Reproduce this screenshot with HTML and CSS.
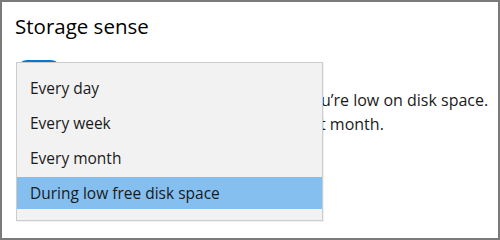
FILE: index.html
```html
<!DOCTYPE html>
<html lang="en">
<head>
    <meta charset="UTF-8">
    <meta name="viewport" content="width=device-width, initial-scale=1.0">
    <title>Storage sense</title>
    <link rel="stylesheet" href="styles.css">
</head>
<body>
    <div class="panel">
        <h1 class="title">Storage sense</h1>
        <div class="toggle"></div>
        <!-- only the tail of the description shows past the open dropdown -->
        <div class="desc">
            <span class="line one">u&rsquo;re low on disk space.</span>
            <span class="line two">t month.</span>
        </div>

        <!-- open dropdown, drawn over the toggle and text -->
        <ul class="menu">
            <li class="item">Every day</li>
            <li class="item">Every week</li>
            <li class="item">Every month</li>
            <li class="item selected">During low free disk space</li>
        </ul>
    </div>
</body>
</html>
```

FILE: styles.css
```css
*, *:before, *:after {
    box-sizing: border-box;
}

:root {
    --border: #7a7a7a;
    --text: #1a1a1a;
    --menu-bg: #f2f2f2;
    --menu-border: #cccccc;
    --accent: #0078d7;
    --selected: #84bff0;
}

body {
    margin: 0;
    font-family: 'Open Sans', 'Noto Sans', sans-serif;
    color: var(--text);
    -webkit-font-smoothing: antialiased;
}

.panel {
    position: relative;
    width: 500px;
    height: 240px;
    border: 2px solid var(--border);
    background-color: #fff;
    padding: 10px 13px 0;
    overflow: hidden;
}

.title {
    margin: 0;
    font-size: 20.5px;
    font-weight: 400;
    line-height: 28px;
    color: #000;
}

.toggle {
    width: 44px;
    height: 20px;
    margin-top: 20px;
    margin-left: 2px;
    border-radius: 10px;
    background-color: var(--accent);
}

.desc {
    display: flex;
    flex-direction: column;
    margin-top: 8px;
    padding-left: 306px;
    font-size: 16px;
    line-height: 24px;
    white-space: nowrap;
}

.line.two {
    margin-left: -1px;
}

.menu {
    position: absolute;
    left: 14px;
    top: 60px;
    width: 307px;
    height: 159px;
    margin: 0;
    padding: 9px 0 0;
    list-style: none;
    background-color: var(--menu-bg);
    border: 1px solid var(--menu-border);
    box-shadow: 1px 1px 0 rgba(0, 0, 0, 0.06);
    display: flex;
    flex-direction: column;
    gap: 3px;
}

.item {
    height: 32px;
    padding: 0 13px;
    font-size: 15.5px;
    line-height: 32px;
    white-space: nowrap;
}

.item.selected {
    background-color: var(--selected);
}
```
